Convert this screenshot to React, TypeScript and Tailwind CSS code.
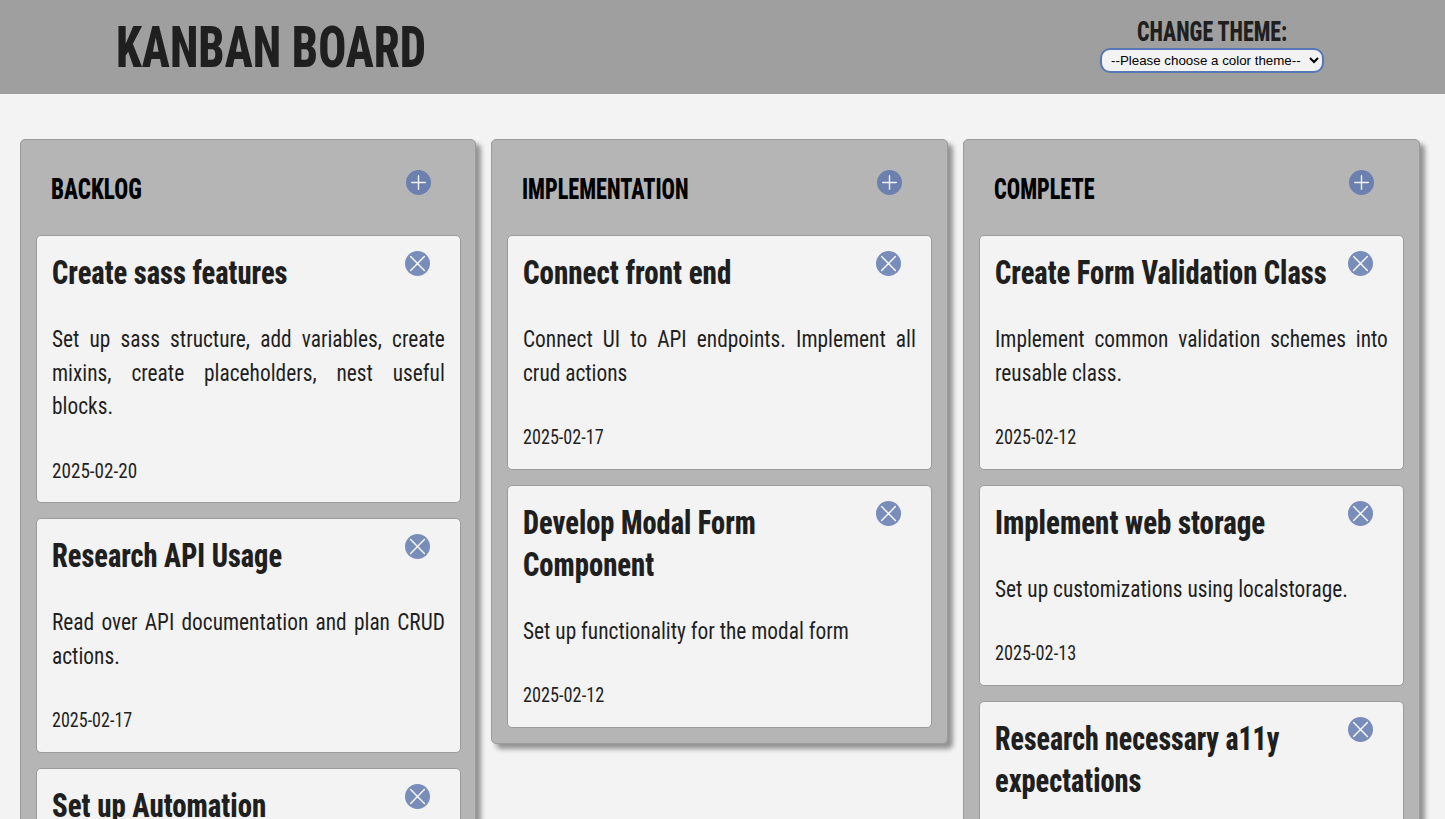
import { useLayoutEffect, useRef, useState } from "react";

type TitleLine = { text: string; width: number };
type Card = { title: TitleLine[]; body: string; date: string; dateWidth: number };
type Column = { name: string; nameWidth: number; cards: Card[] };

const columns: Column[] = [
  {
    name: "BACKLOG",
    nameWidth: 91,
    cards: [
      {
        title: [{ text: "Create sass features", width: 235.5 }],
        body: "Set up sass structure, add variables, create mixins, create placeholders, nest useful blocks.",
        date: "2025-02-20",
        dateWidth: 85.5,
      },
      {
        title: [{ text: "Research API Usage", width: 230 }],
        body: "Read over API documentation and plan CRUD actions.",
        date: "2025-02-17",
        dateWidth: 80.5,
      },
      {
        title: [{ text: "Set up Automation", width: 214.5 }],
        body: "Automate the build and deployment steps.",
        date: "2025-02-18",
        dateWidth: 84,
      },
    ],
  },
  {
    name: "IMPLEMENTATION",
    nameWidth: 166.5,
    cards: [
      {
        title: [{ text: "Connect front end", width: 208 }],
        body: "Connect UI to API endpoints. Implement all crud actions",
        date: "2025-02-17",
        dateWidth: 81,
      },
      {
        title: [
          { text: "Develop Modal Form", width: 232.5 },
          { text: "Component", width: 131.5 },
        ],
        body: "Set up functionality for the modal form",
        date: "2025-02-12",
        dateWidth: 81.5,
      },
    ],
  },
  {
    name: "COMPLETE",
    nameWidth: 100.5,
    cards: [
      {
        title: [{ text: "Create Form Validation Class", width: 332 }],
        body: "Implement common validation schemes into reusable class.",
        date: "2025-02-12",
        dateWidth: 81.5,
      },
      {
        title: [{ text: "Implement web storage", width: 270 }],
        body: "Set up customizations using localstorage.",
        date: "2025-02-13",
        dateWidth: 81.5,
      },
      {
        title: [
          { text: "Research necessary a11y", width: 284 },
          { text: "expectations", width: 146 },
        ],
        body: "Review the accessibility guidelines.",
        date: "2025-02-14",
        dateWidth: 84,
      },
    ],
  },
];

/** Condenses one line of text horizontally so that it spans the given width. */
function Condensed({ text, width }: { text: string; width: number }) {
  const ref = useRef<HTMLSpanElement>(null);
  const [scale, setScale] = useState(1);
  useLayoutEffect(() => {
    if (ref.current) setScale(width / ref.current.offsetWidth);
  }, [text, width]);
  return (
    <span className="block overflow-visible whitespace-nowrap" style={{ width }}>
      <span ref={ref} className="inline-block origin-left" style={{ transform: `scaleX(${scale})` }}>
        {text}
      </span>
    </span>
  );
}

function RoundButton({ kind, label }: { kind: "add" | "remove"; label: string }) {
  return (
    <button aria-label={label} className="block size-[25px] shrink-0 rounded-full bg-[#5b74ae] opacity-80">
      <svg viewBox="0 0 25 25" className="size-[25px]" fill="none" stroke="#fff" strokeWidth="1.4" strokeLinecap="round">
        {kind === "add" ? <path d="M12.5 5.7v13.6M5.7 12.5h13.6" /> : <path d="M5.6 5.6l13.8 13.8M19.4 5.6L5.6 19.4" />}
      </svg>
    </button>
  );
}

function TaskCard({ card }: { card: Card }) {
  return (
    <article className="rounded-[5px] border border-[#9b9b9b] bg-[#f3f3f3] px-[15px] pt-[15px] pb-[16.7px] text-[#1f1f1f]">
      <div className="flex items-start justify-between pr-[15px]">
        <h3 className="text-[34px] leading-[42px] font-extrabold">
          {card.title.map((line) => (
            <Condensed key={line.text} text={line.text} width={line.width} />
          ))}
        </h3>
        <RoundButton kind="remove" label="Delete task" />
      </div>
      <p className="mt-[30.1px] w-[110.01%] origin-left scale-x-[0.909] text-justify text-[23.5px] leading-[33.6px]">
        {card.body}
      </p>
      <div className="mt-[33.8px] text-[19.5px] leading-7">
        <Condensed text={card.date} width={card.dateWidth} />
      </div>
    </article>
  );
}

export default function App() {
  return (
    <div className="h-[819px] overflow-hidden bg-[#f3f3f3] font-[Roboto,'Liberation_Sans',sans-serif] [font-stretch:75%]">
      <header className="flex h-[94px] items-start justify-between bg-[#9f9f9f] pr-[121px] pl-[115.5px] text-[#1f1f1f]">
        <h1 className="pt-[6px] text-[58px] leading-[82px] font-extrabold">
          <Condensed text="KANBAN BOARD" width={310} />
        </h1>
        <div className="flex flex-col items-center pt-4">
          <label htmlFor="theme" className="text-[28px] leading-8 font-extrabold">
            <Condensed text="CHANGE THEME:" width={150} />
          </label>
          <select
            id="theme"
            className="h-[25px] w-[224px] rounded-[10px] border-2 border-[#5577b5] bg-[#f3f3f3] pl-[5px] font-['Liberation_Sans',Arial,sans-serif] text-[13.333px] text-black"
          >
            <option>--Please choose a color theme--</option>
            <option>Light</option>
            <option>Dark</option>
          </select>
        </div>
      </header>
      <main className="grid grid-cols-3 items-start gap-[15px] pt-[45px] pr-[25.35px] pl-[19.7px]">
        {columns.map((column) => (
          <section
            key={column.name}
            className="rounded-[5px] border border-[#9b9b9b] bg-[#b5b5b5] py-[15px] pr-[14.8px] pl-[15px] shadow-[5px_5px_5px_rgba(0,0,0,0.4)]"
          >
            <div className="flex h-20 items-start justify-between pt-[15px] pr-[30px] pl-[15px]">
              <h2 className="pt-[3px] text-[29px] leading-8 font-extrabold text-black">
                <Condensed text={column.name} width={column.nameWidth} />
              </h2>
              <RoundButton kind="add" label="Add task" />
            </div>
            <div className="flex flex-col gap-[15px]">
              {column.cards.map((card) => (
                <TaskCard key={card.title[0].text} card={card} />
              ))}
            </div>
          </section>
        ))}
      </main>
    </div>
  );
}
